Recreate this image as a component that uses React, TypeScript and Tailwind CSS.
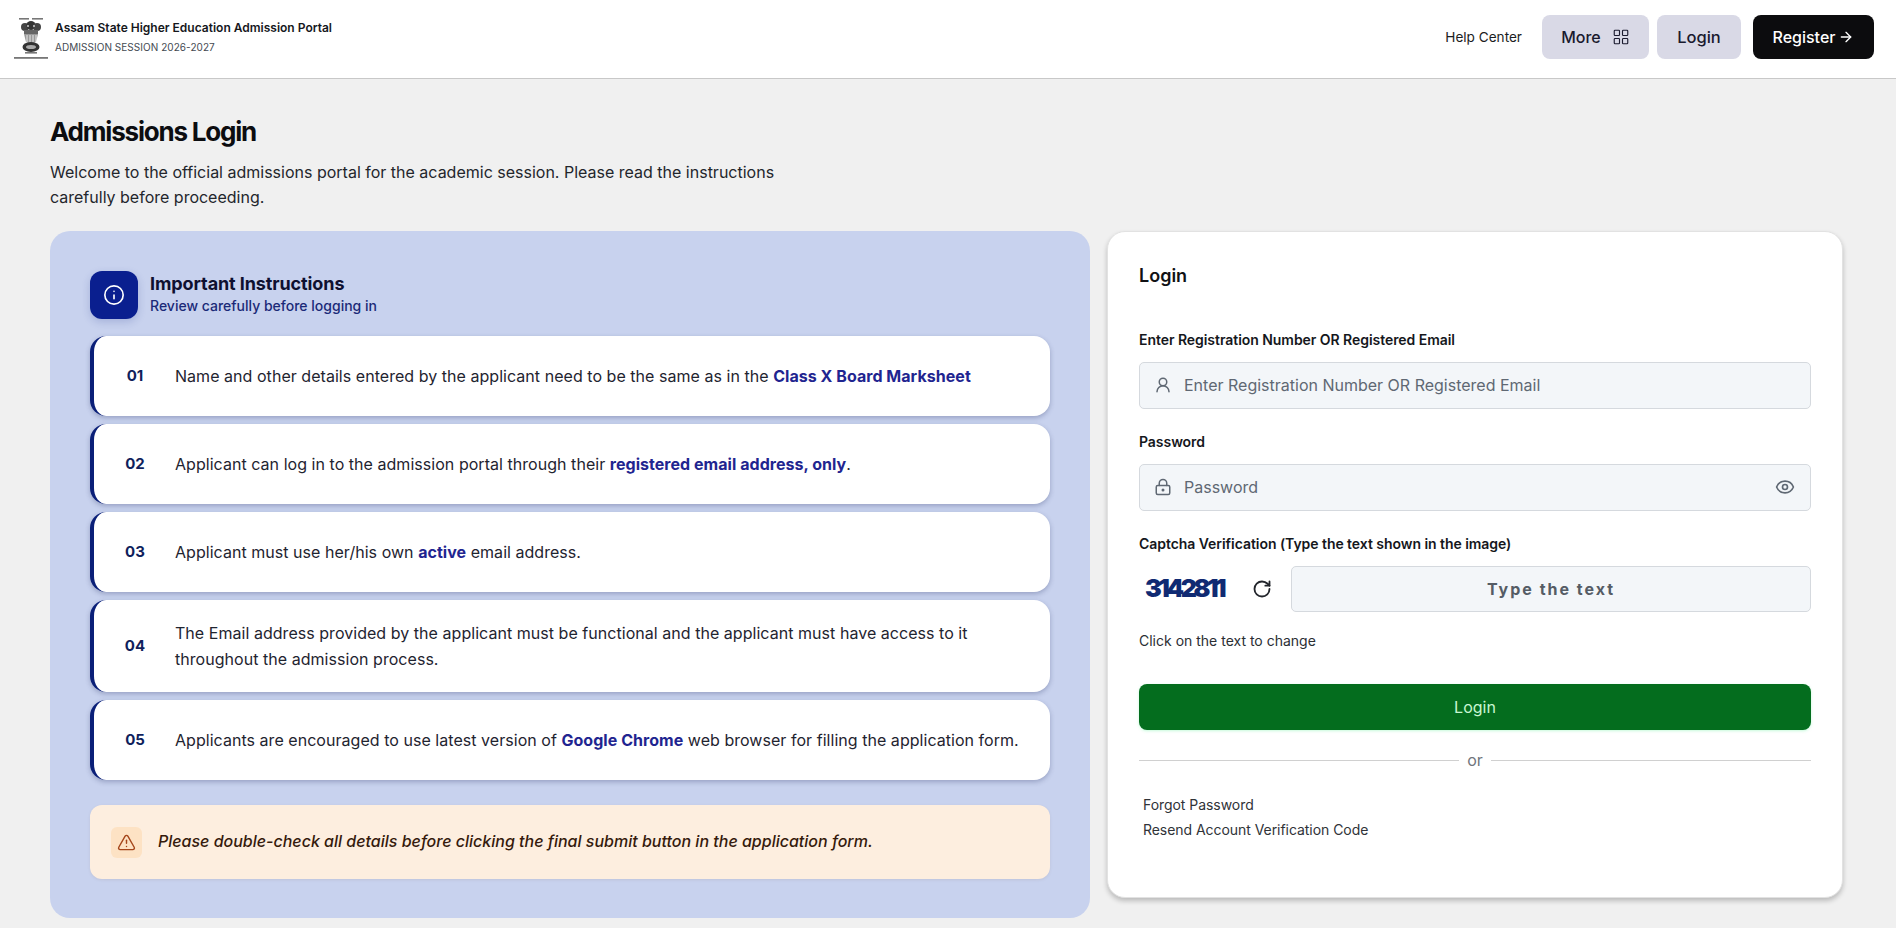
import { ArrowRight, Eye, Info, LayoutGrid, LockKeyhole, RotateCw, TriangleAlert, UserRound } from "lucide-react";
import type { ReactNode } from "react";

function Emblem() {
  return (
    <svg width="34" height="44" viewBox="0 0 34 44" className="mt-[6px] shrink-0">
      <rect x="5" y="0" width="10" height="1.6" fill="#777" />
      <rect x="18" y="0" width="11" height="1.6" fill="#777" />
      <circle cx="11" cy="9" r="4" fill="#444" />
      <circle cx="17" cy="7.5" r="4.6" fill="#333" />
      <circle cx="23" cy="9" r="4" fill="#444" />
      <circle cx="14" cy="8" r="1" fill="#ccc" />
      <circle cx="20" cy="8" r="1" fill="#ccc" />
      <rect x="10" y="12" width="14" height="4" fill="#666" />
      <path d="M10 16h14l-2 8h-10z" fill="#999" />
      <path d="M13 17v7M16 17v7M19 17v7M22 17v7" stroke="#fff" strokeWidth="0.8" />
      <ellipse cx="17" cy="29" rx="8.5" ry="5" fill="#333" />
      <ellipse cx="17" cy="29" rx="5" ry="2" fill="#aaa" />
      <rect x="11" y="34" width="12" height="1.6" fill="#777" />
      <rect x="0" y="39" width="34" height="1.8" fill="#777" />
    </svg>
  );
}

function Instruction({ num, children }: { num: string; children: ReactNode }) {
  return (
    <div className="flex min-h-[80px] items-center rounded-2xl border-l-4 border-[#0a1f78] bg-white py-[20px] pr-6 shadow-[0_2px_5px_rgba(40,50,100,0.3)]">
      <div className="w-[81px] shrink-0 pl-[1px] text-center text-[15px] font-bold text-[#101f5c]">{num}</div>
      <p className="text-[16px] leading-[26px] tracking-[0.04px] text-[#1f2430]">{children}</p>
    </div>
  );
}

function Strong({ children }: { children: ReactNode }) {
  return <span className="font-bold text-[#1f2590]">{children}</span>;
}

function Field({ label, placeholder, icon, trailing }: { label: string; placeholder: string; icon: ReactNode; trailing?: ReactNode }) {
  return (
    <div>
      <div className="text-[14px] leading-[20px] font-semibold tracking-[-0.05px] text-[#15171c]">{label}</div>
      <div className="mt-[12px] flex h-[47px] items-center rounded-[5px] border border-[#d5d9de] bg-[#f3f6f9] px-[14px] pb-[1px] text-[#5f6873]">
        {icon}
        <span className="ml-[12px] flex-1 text-[16px]">{placeholder}</span>
        {trailing}
      </div>
    </div>
  );
}

export default function App() {
  return (
    <div className="min-h-[928px] bg-[#f0f0f0] font-['Inter',sans-serif] text-[#15171c]">
      <header className="flex h-[79px] items-center border-b border-[#c8c8c8] bg-white pb-[4px] pl-[14px] pr-[22px]">
        <Emblem />
        <div className="ml-[7px]">
          <div className="text-[12px] leading-[18px] font-semibold text-[#15171c]">Assam State Higher Education Admission Portal</div>
          <div className="mt-[2px] text-[10px] leading-[16px] tracking-[0.05px] text-[#444a52]">ADMISSION SESSION 2026-2027</div>
        </div>
        <div className="ml-auto flex items-center">
          <span className="text-[13.6px] text-[#1b1d22]">Help Center</span>
          <button className="ml-[20px] flex h-[44px] w-[107px] items-center justify-center gap-[11px] rounded-lg bg-[#d9d9e6] text-[16px] font-medium text-[#1a1a2e]">
            More <LayoutGrid size={18} strokeWidth={1.5} />
          </button>
          <button className="ml-[8px] h-[44px] w-[84px] rounded-lg bg-[#d9d9e6] text-[16.5px] font-medium text-[#1a1a2e]">Login</button>
          <button className="ml-[12px] flex h-[44px] w-[121px] items-center justify-center gap-[3px] rounded-lg bg-[#0c0c0e] text-[16px] font-medium text-white">
            Register <ArrowRight size={16} strokeWidth={2} />
          </button>
        </div>
      </header>

      <main className="px-[50px] pt-[35px]">
        <h1 className="text-[26px] leading-[36px] font-bold tracking-[-1.2px] text-[#0c0d10]">Admissions Login</h1>
        <p className="mt-[10px] w-[760px] text-[16px] leading-[25px] text-[#23262c]">
          Welcome to the official admissions portal for the academic session. Please read the instructions carefully before proceeding.
        </p>

        <div className="mt-[21px] flex items-start gap-[17px]">
          <section className="h-[687px] w-[1040px] rounded-[20px] bg-[#c8d2ee] p-[40px]">
            <div className="flex items-center gap-[12px]">
              <div className="flex h-[48px] w-[48px] items-center justify-center rounded-xl bg-[#0a1f8f] text-white shadow-[0_3px_8px_rgba(30,50,140,0.2)]">
                <Info size={22} strokeWidth={1.8} />
              </div>
              <div className="pb-[2px]">
                <div className="text-[18px] leading-[24px] font-bold tracking-[-0.1px] text-[#0e1030]">Important Instructions</div>
                <div className="text-[14px] leading-[20px] font-medium text-[#1b2a78]">Review carefully before logging in</div>
              </div>
            </div>

            <div className="mt-[17px] flex flex-col gap-[8px]">
              <Instruction num="01">
                Name and other details entered by the applicant need to be the same as in the <Strong>Class X Board Marksheet</Strong>
              </Instruction>
              <Instruction num="02">
                Applicant can log in to the admission portal through their <Strong>registered email address, only</Strong>.
              </Instruction>
              <Instruction num="03">
                Applicant must use her/his own <Strong>active</Strong> email address.
              </Instruction>
              <Instruction num="04">
                The Email address provided by the applicant must be functional and the applicant must have access to it throughout the admission process.
              </Instruction>
              <Instruction num="05">
                Applicants are encouraged to use latest version of <Strong>Google Chrome</Strong> web browser for filling the application form.
              </Instruction>
            </div>

            <div className="mt-[25px] flex h-[74px] items-center rounded-xl bg-[#fdeedf] pl-[21px] shadow-[0_1px_3px_rgba(120,100,80,0.12)]">
              <div className="flex h-[31px] w-[31px] items-center justify-center rounded-md bg-[#fde2c4] text-[#a5461a]">
                <TriangleAlert size={19} strokeWidth={1.8} />
              </div>
              <p className="mb-[3px] ml-[16px] text-[16px] font-medium text-[#351a0c] italic">
                Please double-check all details before clicking the final submit button in the application form.
              </p>
            </div>
          </section>

          <section className="h-[667px] w-[736px] rounded-[18px] border border-[#e2e2e2] bg-white px-[31px] pt-[31px] shadow-[0_3px_5px_rgba(0,0,0,0.22)]">
            <h2 className="text-[18px] leading-[26px] font-semibold text-[#101114]">Login</h2>
            <div className="mt-[41px] flex flex-col gap-[23px]">
              <Field label="Enter Registration Number OR Registered Email" placeholder="Enter Registration Number OR Registered Email" icon={<UserRound size={18} strokeWidth={2} />} />
              <Field
                label="Password"
                placeholder="Password"
                icon={<LockKeyhole size={18} strokeWidth={2} />}
                trailing={<Eye size={20} strokeWidth={2} className="mr-[1px]" />}
              />
            </div>

            <div className="mt-[23px] text-[14px] leading-[20px] font-semibold tracking-[-0.05px] text-[#15171c]">Captcha Verification (Type the text shown in the image)</div>
            <div className="mt-[12px] flex h-[46px] items-center">
              <span className="ml-[6px] w-[84px] text-[25px] font-black tracking-[-3.3px] text-[#102a72]">3142811</span>
              <RotateCw size={20} strokeWidth={2.2} className="ml-[23px] text-[#23262c]" />
              <div className="ml-[19px] flex h-[46px] flex-1 items-center justify-center rounded-[5px] border border-[#d5d9de] bg-[#f3f6f9] text-[16px] font-bold tracking-[2px] text-[#555c65]">
                Type the text
              </div>
            </div>
            <div className="mt-[19px] text-[14px] leading-[20px] text-[#2b2e33]">Click on the text to change</div>

            <button className="mt-[33px] flex h-[46px] w-full items-center justify-center rounded-lg bg-[#046d1e] pb-[1px] text-[16px] text-[#c9f7d2] shadow-[0_1px_3px_rgba(90,240,150,0.35)]">
              Login
            </button>

            <div className="mt-[18px] flex items-center gap-[8px]">
              <div className="h-px flex-1 bg-[#d0d0d0]" />
              <span className="text-[16px] leading-[24px] text-[#70757c]">or</span>
              <div className="h-px flex-1 bg-[#d0d0d0]" />
            </div>

            <div className="mt-[23px] flex flex-col gap-[5px] pl-[4px] text-[14px] leading-[20px] tracking-[-0.05px] text-[#303338]">
              <span>Forgot Password</span>
              <span>Resend Account Verification Code</span>
            </div>
          </section>
        </div>
      </main>
    </div>
  );
}
